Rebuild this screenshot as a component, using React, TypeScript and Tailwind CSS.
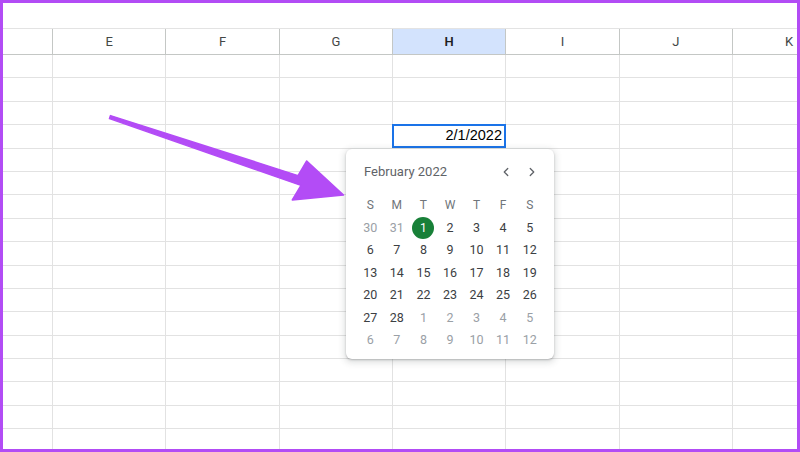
import { ChevronLeft, ChevronRight } from "lucide-react";

const COLUMNS = ["E", "F", "G", "H", "I", "J", "K"];
const ROW_COUNT = 17;
const SELECTED_ROW = 3;
const SELECTED_COL = 3;

const WEEKDAYS = ["S", "M", "T", "W", "T", "F", "S"];

// [day, inMonth]
const DAYS: [number, boolean][] = [
  [30, false], [31, false], [1, true], [2, true], [3, true], [4, true], [5, true],
  [6, true], [7, true], [8, true], [9, true], [10, true], [11, true], [12, true],
  [13, true], [14, true], [15, true], [16, true], [17, true], [18, true], [19, true],
  [20, true], [21, true], [22, true], [23, true], [24, true], [25, true], [26, true],
  [27, true], [28, true], [1, false], [2, false], [3, false], [4, false], [5, false],
  [6, false], [7, false], [8, false], [9, false], [10, false], [11, false], [12, false],
];

function DatePicker() {
  return (
    <div className="absolute left-[343px] top-[146px] h-[210px] w-[208px] rounded-[6px] bg-white shadow-[0_2px_6px_2px_rgba(60,64,67,0.15),0_1px_2px_rgba(60,64,67,0.3)]">
      <div className="flex h-[45px] items-center pl-[18px] pr-[15px]">
        <span className="flex-1 text-[13px] text-[#5f6368]">February 2022</span>
        <div className="flex items-center gap-[12px] text-[#5f6368]">
          <ChevronLeft size={14} strokeWidth={2.2} />
          <ChevronRight size={14} strokeWidth={2.2} />
        </div>
      </div>
      <div className="grid grid-cols-7 px-[11px]">
        {WEEKDAYS.map((d, i) => (
          <div
            key={i}
            className="flex h-[22px] items-center justify-center text-[12px] text-[#70757a]"
          >
            {d}
          </div>
        ))}
      </div>
      <div className="mt-[1px] grid grid-cols-7 px-[11px]">
        {DAYS.map(([d, inMonth], i) => (
          <div key={i} className="flex h-[22.5px] items-center justify-center">
            {i === 2 ? (
              <span className="flex h-[22px] w-[22px] items-center justify-center rounded-full bg-[#188038] text-[12px] text-white">
                {d}
              </span>
            ) : (
              <span
                className={
                  inMonth
                    ? "text-[12.5px] text-[#3c4043]"
                    : "text-[12.5px] text-[#9aa0a6]"
                }
              >
                {d}
              </span>
            )}
          </div>
        ))}
      </div>
    </div>
  );
}

export default function App() {
  return (
    <div className="relative h-[452px] w-[800px] overflow-hidden border-[3px] border-[#b24cf5] bg-white font-['Roboto','Liberation_Sans',sans-serif]">
      <div className="h-[26px] border-b border-[#e3e3e3]" />

      {/* column headers */}
      <div className="flex h-[26px] border-b border-[#c4c7c5]">
        <div className="w-[50px] shrink-0 border-r border-[#c4c7c5]" />
        {COLUMNS.map((c, i) => (
          <div
            key={c}
            className={
              i === SELECTED_COL
                ? "flex w-[113.33px] shrink-0 items-center justify-center border-r border-[#c4c7c5] bg-[#d3e3fd] text-[13px] font-semibold text-[#1f1f1f]"
                : "flex w-[113.33px] shrink-0 items-center justify-center border-r border-[#c4c7c5] text-[13px] text-[#444746]"
            }
          >
            {c}
          </div>
        ))}
      </div>

      {/* grid */}
      {Array.from({ length: ROW_COUNT }).map((_, r) => (
        <div key={r} className="flex h-[23.4px] border-b border-[#e2e2e2]">
          <div className="w-[50px] shrink-0 border-r border-[#e2e2e2]" />
          {COLUMNS.map((c, i) => (
            <div
              key={c}
              className="relative w-[113.33px] shrink-0 border-r border-[#e2e2e2]"
            >
              {r === SELECTED_ROW && i === SELECTED_COL && (
                <div className="absolute -left-px -top-px flex h-[24px] w-[114px] items-center justify-end border-2 border-[#1a73e8] bg-white pr-[2px] font-['Liberation_Sans',Arial,sans-serif] text-[14.5px] text-black">
                  2/1/2022
                </div>
              )}
            </div>
          ))}
        </div>
      ))}

      <DatePicker />

      <svg
        className="pointer-events-none absolute left-0 top-0"
        width="794"
        height="446"
        viewBox="3 3 794 446"
      >
        <polygon
          points="110.5,115.6 298,175.6 306.7,161 343.5,195 292.3,200 301,185.4 109.5,118.6"
          fill="#b34cf6"
          stroke="#b34cf6"
          strokeWidth="1.5"
          strokeLinejoin="round"
        />
      </svg>
    </div>
  );
}
